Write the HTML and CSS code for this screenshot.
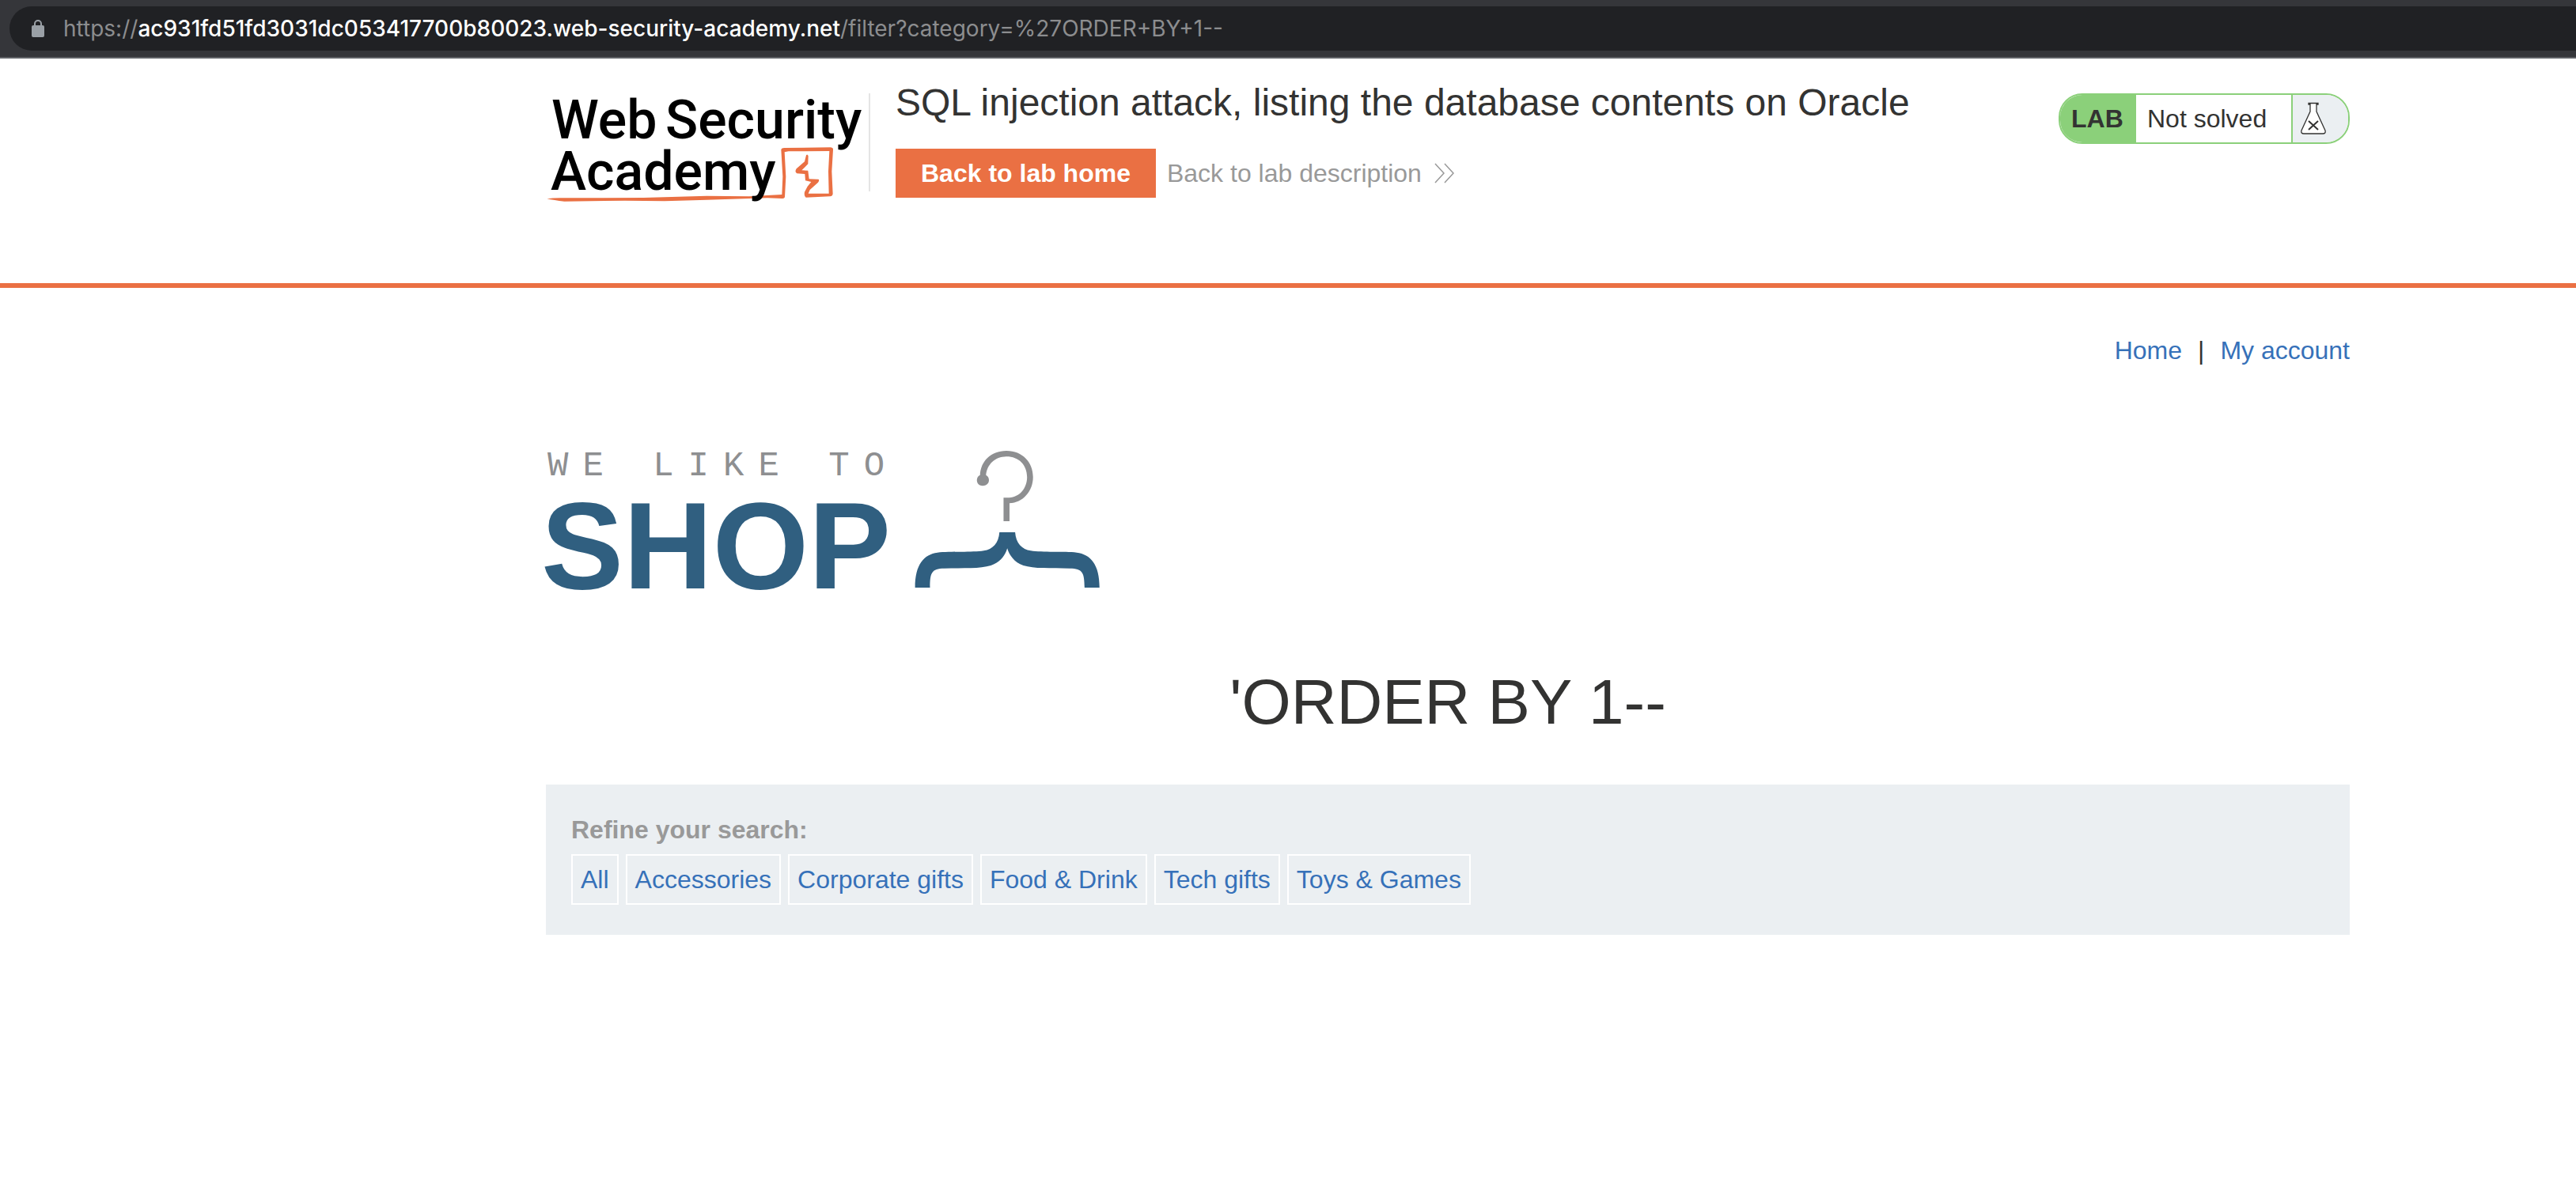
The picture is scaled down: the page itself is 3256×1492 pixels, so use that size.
FILE: index.html
```html
<!DOCTYPE html>
<html lang="en">
<head>
<meta charset="utf-8">
<title>SQL injection attack, listing the database contents on Oracle</title>
<link rel="stylesheet" href="styles.css">
</head>
<body>
<div class="toolbar">
  <div class="address">
    <svg class="lock" viewBox="0 0 16 22" aria-hidden="true">
      <rect x="0" y="7" width="16" height="15" rx="2" fill="#9aa0a6"/>
      <path d="M4 8V5a4 4 0 0 1 8 0v3" fill="none" stroke="#9aa0a6" stroke-width="2"/>
    </svg>
    <div class="url">https://<span class="host">ac931fd51fd3031dc053417700b80023.web-security-academy.net</span>/filter?category=%27ORDER+BY+1--</div>
  </div>
</div>

<header class="lab-header">
  <a class="academy" href="#" aria-label="Web Security Academy">
    <svg class="academy-logo" viewBox="0 0 400 140">
      <g transform="translate(-10 -28) scale(.33333)" fill="#ea7043">
        <path d="M34 484Q60 479 110 481L400 480L640 473L800 475L925 468L928 400L922 298Q924 291 934 291L1108 289Q1120 290 1119 298L1114 380L1118 466Q1116 476 1106 475L1016 479Q1008 474 1011 458L1022 437L1036 420L1014 415L1012 390L982 388Q972 382 980 370L1011 343L1017 319Q1022 313 1025 322L1024 352L1000 376L1024 377L1028 409L1064 410Q1068 415 1062 422L1031 450L1025 464L1103 464L1101 380L1105 303L950 304L935 307L940 400L936 478Q934 484 926 483L870 481L640 488L480 493L330 491L100 494Q60 490 34 484Z"/>
      </g>
      <text class="academy-text" y="57"><tspan x="7">Web</tspan><tspan x="151">Security</tspan></text>
      <text class="academy-text" x="6" y="122">Academy</text>
    </svg>
  </a>
  <div class="lab-title">
    <h2>SQL injection attack, listing the database contents on Oracle</h2>
    <div class="lab-links">
      <button class="lab-home" type="button">Back to lab home</button>
      <a class="lab-description" href="#">Back to lab description
        <svg class="chevrons" viewBox="0 0 26 26" aria-hidden="true"><path d="M1 1L12 13L1 25M13 1L24 13L13 25" fill="none" stroke="#999" stroke-width="1.5"/></svg>
      </a>
    </div>
  </div>
  <div class="status">
    <span class="status-tag">LAB</span>
    <span class="status-text">Not solved</span>
    <span class="status-icon">
      <svg class="flask" viewBox="0 0 34 42" aria-hidden="true">
        <path d="M11 1.5H23V3H21V12L32 36Q33 40 29 40H5Q1 40 2 36L13 12V3H11Z" fill="#fff" stroke="#333332" stroke-width="1.3"/>
        <path d="M11 24L23 35M23 24L11 35" stroke="#333332" stroke-width="2"/>
      </svg>
    </span>
  </div>
</header>

<main class="shop">
  <nav class="account">
    <a href="#">Home</a><span>|</span><a href="#">My account</a>
  </nav>
  <svg class="shop-logo" viewBox="0 0 720 180" role="img" aria-label="We like to shop">
    <text class="tagline" x="2" y="33">WE LIKE TO</text>
    <text class="shop-name" x="-6" y="176">SHOP</text>
    <g transform="translate(-10 -18) scale(.4719 .33333)">
      <path fill="#8e8f91" d="M1184 152C1186 100 1212 60 1255 60C1298 60 1326 104 1326 160C1326 214 1298 258 1263 259V327H1247V238H1262C1290 236 1310 202 1310 160C1310 114 1288 82 1255 82C1224 82 1203 112 1200 152C1210 160 1209 176 1205 184C1199 196 1183 196 1178 184C1173 172 1176 157 1184 152Z"/>
      <path fill="#305f80" d="M1236 369H1278C1280 410 1296 434 1320 439C1350 446 1410 441 1443 446C1480 453 1504 490 1504 579H1464C1463 522 1460 507 1424 506C1370 504 1330 508 1300 495C1276 484 1262 455 1257 430C1252 455 1238 484 1213 495C1184 508 1140 504 1088 506C1054 507 1050 522 1050 579H1010C1010 490 1034 453 1070 446C1104 441 1164 446 1194 439C1218 434 1234 410 1236 369Z"/>
    </g>
  </svg>
  <h1>'ORDER BY 1--</h1>
  <section class="filters">
    <p>Refine your search:</p>
    <div class="filter-list">
      <a href="#">All</a>
      <a href="#">Accessories</a>
      <a href="#">Corporate gifts</a>
      <a href="#">Food &amp; Drink</a>
      <a href="#">Tech gifts</a>
      <a href="#">Toys &amp; Games</a>
    </div>
  </section>
</main>
</body>
</html>
```
FILE: styles.css
```css
* {
  box-sizing: border-box;
}

body {
  margin: 0;
  background: #fff;
  color: #333332;
  font: 32px/38px "Liberation Sans", Arial, sans-serif;
}

h1,
h2,
p {
  margin: 0;
}

a {
  color: #3671b9;
  text-decoration: none;
}

/* Browser address bar */
.toolbar {
  padding: 8px 0 8px 12px;
  background: #35363a;
  border-bottom: 2px solid #5f6166;
}

.address {
  display: flex;
  align-items: center;
  gap: 24px;
  height: 56px;
  padding-left: 28px;
  border-radius: 28px 0 0 28px;
  background: #202124;
}

.lock {
  width: 16px;
  height: 22px;
}

.url {
  color: #8c8d8f;
  font: 28px/36px Inter, sans-serif;
  white-space: nowrap;
}

.host {
  color: #fff;
  font-weight: 500;
}

/* Lab header */
.lab-header {
  display: flex;
  align-items: flex-start;
  padding: 28px 286px 108px 690px;
  border-bottom: 6px solid #ea7043;
}

.academy {
  flex: none;
  width: 410px;
  height: 124px;
  margin: 16px 32px 0 0;
  border-right: 2px solid #e5e5e5;
}

.academy-logo {
  display: block;
  width: 400px;
  height: 140px;
  overflow: visible;
}

.academy-text {
  fill: #000;
  font: 500 68px Roboto, sans-serif;
}

.lab-title {
  flex: 1;
}

.lab-title h2 {
  font-size: 48px;
  font-weight: 400;
  line-height: 56px;
}

.lab-links {
  display: flex;
  align-items: center;
  gap: 14px;
  margin-top: 30px;
}

.lab-home {
  height: 62px;
  padding: 0 32px;
  border: 0;
  background: #ea7043;
  color: #fff;
  font: bold 32px/38px "Liberation Sans", Arial, sans-serif;
}

.lab-description {
  display: flex;
  align-items: center;
  gap: 16px;
  color: #999;
}

.chevrons {
  width: 26px;
  height: 26px;
}

.status {
  display: flex;
  flex: none;
  width: 368px;
  height: 64px;
  margin-top: 16px;
  overflow: hidden;
  border: 2px solid #8bd07a;
  border-radius: 30px;
  line-height: 60px;
}

.status-tag {
  width: 96px;
  padding-left: 14px;
  background: #8bd07a;
  font-weight: 700;
}

.status-text {
  flex: 1;
  padding-left: 14px;
}

.status-icon {
  display: flex;
  align-items: center;
  width: 72px;
  padding-left: 9px;
  border-left: 2px solid #8bd07a;
  background: #ebeff2;
}

.flask {
  width: 34px;
  height: 42px;
}

/* Shop page */
.shop {
  padding: 60px 286px 60px 690px;
}

.account {
  display: flex;
  justify-content: flex-end;
  gap: 20px;
}

.shop-logo {
  display: block;
  width: 720px;
  height: 180px;
  margin-top: 106px;
  overflow: visible;
}

.tagline {
  fill: #8e8f91;
  font: 44px "Liberation Mono", monospace;
  letter-spacing: 18px;
}

.shop-name {
  fill: #305f80;
  font: bold 156px "Liberation Sans", Arial, sans-serif;
}

.shop h1 {
  margin: 92px 0 56px;
  font-size: 80px;
  font-weight: 400;
  line-height: 96px;
  text-align: center;
}

.filters {
  padding: 38px 32px;
  background: #ebeff2;
}

.filters p {
  color: #999;
  font-weight: 700;
}

.filter-list {
  display: flex;
  flex-wrap: wrap;
  gap: 9px;
  margin-top: 12px;
}

.filter-list a {
  padding: 0 10px;
  border: 2px solid #fff;
  line-height: 60px;
}
```
